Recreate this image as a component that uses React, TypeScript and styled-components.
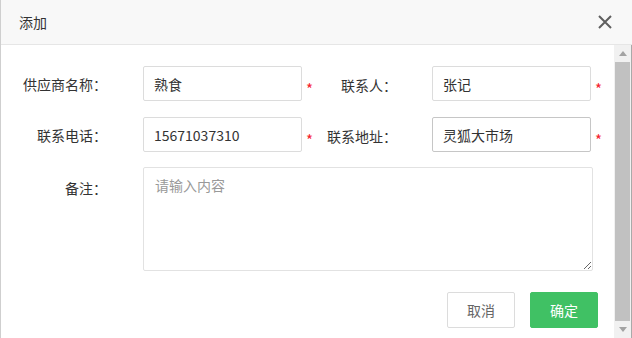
import styled, { createGlobalStyle } from "styled-components";

const GlobalStyle = createGlobalStyle`
  html, body {
    margin: 0;
    padding: 0;
    background: #fff;
  }
  * {
    box-sizing: border-box;
  }
  body {
    font-family: "Noto Sans CJK SC", "Noto Sans", sans-serif;
  }
`;

const Dialog = styled.div`
  width: 632px;
  height: 338px;
  display: flex;
  flex-direction: column;
  border-left: 1px solid #cfcfcf;
  background: #fff;
  overflow: hidden;
`;

const Header = styled.div`
  height: 45px;
  flex-shrink: 0;
  display: flex;
  align-items: center;
  justify-content: space-between;
  padding: 0 19px 0 18px;
  background: #f8f8f8;
  border-bottom: 1px solid #e6e6e6;
`;

const Title = styled.span`
  font-size: 14px;
  color: #333;
  margin-top: -1px;
`;

const CloseButton = styled.button`
  width: 16px;
  height: 16px;
  padding: 0;
  border: none;
  background: none;
  display: flex;
  cursor: pointer;
`;

const Body = styled.div`
  flex: 1;
  display: flex;
  min-height: 0;
`;

const Content = styled.div`
  flex: 1;
  min-width: 0;
  padding: 21px 16px 0 18px;
`;

const Form = styled.div`
  display: grid;
  grid-template-columns: 124px 159px 130px 159px 1fr;
  grid-template-rows: 35px 35px auto;
  row-gap: 16px;
  align-items: center;
`;

const Label = styled.label<{ $top?: boolean }>`
  font-size: 14px;
  color: #333;
  text-align: right;
  padding-right: 36px;
  white-space: nowrap;
  align-self: ${({ $top }) => ($top ? "start" : "center")};
  line-height: ${({ $top }) => ($top ? "38px" : "35px")};
  padding-top: 1px;
`;

const MidCell = styled.div`
  display: flex;
  align-items: center;
  justify-content: space-between;
  height: 35px;
`;

const Star = styled.span`
  color: #f5222d;
  font-size: 15px;
  line-height: 1;
  padding-top: 9px;
  margin-left: 4px;
`;

const MidLabel = styled.label`
  font-size: 14px;
  color: #333;
  white-space: nowrap;
  padding-right: 35px;
  padding-top: 2px;
`;

const Input = styled.input<{ $hover?: boolean }>`
  width: 100%;
  height: 35px;
  border: 1px solid ${({ $hover }) => ($hover ? "#c6c6c6" : "#dcdcdc")};
  border-radius: 2px;
  padding: 0 10px;
  font-family: inherit;
  font-size: 14px;
  color: #333;
  outline: none;
  background: #fff;
`;

const TextArea = styled.textarea`
  grid-column: 2 / 5;
  height: 104px;
  width: 450px;
  margin-top: -1px;
  border: 1px solid #e2e2e2;
  border-radius: 2px;
  padding: 7px 11px;
  font-family: inherit;
  font-size: 14px;
  line-height: 20px;
  color: #333;
  outline: none;
  resize: vertical;
  &::placeholder {
    color: #999;
  }
`;

const Footer = styled.div`
  display: flex;
  justify-content: flex-end;
  gap: 15px;
  margin-top: 21px;
`;

const Button = styled.button<{ $primary?: boolean }>`
  height: 36px;
  padding: 0 19px;
  border-radius: 2px;
  font-family: inherit;
  font-size: 14px;
  cursor: pointer;
  border: 1px solid ${({ $primary }) => ($primary ? "#40c164" : "#dcdcdc")};
  background: ${({ $primary }) => ($primary ? "#40c164" : "#fff")};
  color: ${({ $primary }) => ($primary ? "#fff" : "#666")};
`;

const ScrollTrack = styled.div`
  width: 18px;
  flex-shrink: 0;
  display: flex;
  flex-direction: column;
  background: #f1f1f1;
  border-right: 1px solid #a9a9a9;
`;

const ScrollArrow = styled.div`
  height: 17px;
  display: flex;
  align-items: center;
  justify-content: center;
`;

const ScrollThumb = styled.div`
  flex: 1;
  margin: 0 1px;
  background: #c1c1c1;
`;

const App = () => {
  return (
    <>
      <GlobalStyle />
      <Dialog>
        <Header>
          <Title>添加</Title>
          <CloseButton aria-label="close">
            <svg width="16" height="16" viewBox="0 0 16 16">
              <path d="M2 2 L14 14 M14 2 L2 14" stroke="#5f5f5f" strokeWidth="2" fill="none" />
            </svg>
          </CloseButton>
        </Header>
        <Body>
          <Content>
            <Form>
              <Label>供应商名称：</Label>
              <Input defaultValue="熟食" />
              <MidCell>
                <Star>*</Star>
                <MidLabel>联系人：</MidLabel>
              </MidCell>
              <Input defaultValue="张记" />
              <Star>*</Star>

              <Label>联系电话：</Label>
              <Input defaultValue="15671037310" />
              <MidCell>
                <Star>*</Star>
                <MidLabel>联系地址：</MidLabel>
              </MidCell>
              <Input defaultValue="灵狐大市场" $hover />
              <Star>*</Star>

              <Label $top>备注：</Label>
              <TextArea placeholder="请输入内容" />
            </Form>
            <Footer>
              <Button>取消</Button>
              <Button $primary>确定</Button>
            </Footer>
          </Content>
          <ScrollTrack>
            <ScrollArrow>
              <svg width="8" height="5" viewBox="0 0 8 5">
                <path d="M0 5 L4 0 L8 5 Z" fill="#a3a3a3" />
              </svg>
            </ScrollArrow>
            <ScrollThumb />
            <ScrollArrow>
              <svg width="8" height="5" viewBox="0 0 8 5">
                <path d="M0 0 L8 0 L4 5 Z" fill="#a3a3a3" />
              </svg>
            </ScrollArrow>
          </ScrollTrack>
        </Body>
      </Dialog>
    </>
  );
};

export default App;
